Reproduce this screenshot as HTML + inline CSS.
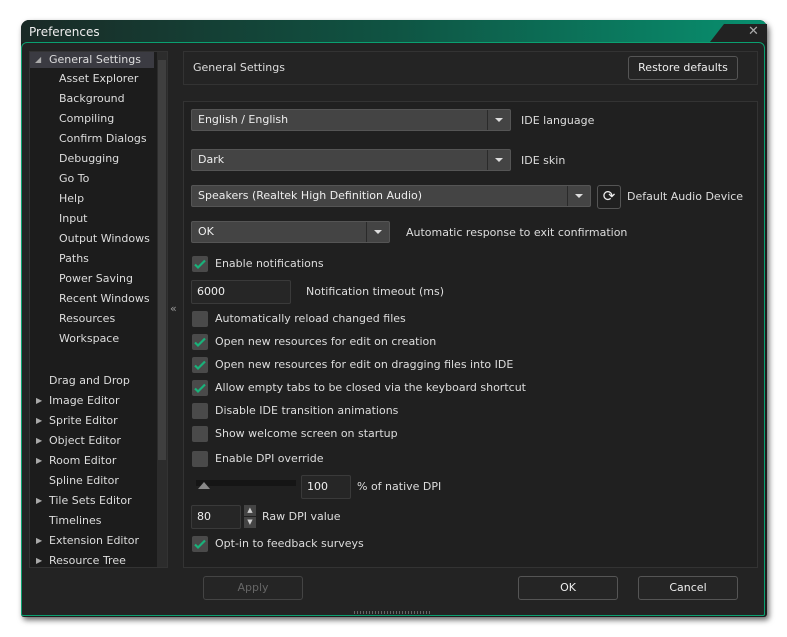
<!DOCTYPE html><html><head><style>
body{margin:0;width:787px;height:637px;background:#fff;position:relative;overflow:hidden;font-family:"DejaVu Sans","Liberation Sans",sans-serif;font-size:11px;color:#ddd}
.a{position:absolute}
.win{left:21px;top:20px;width:746px;height:597px;background:#1e1e1e;border-radius:8px 8px 3px 3px;box-shadow:2px 3px 6px rgba(0,0,0,.6)}
.title{left:21px;top:20px;width:746px;height:22px;border-radius:8px 8px 0 0;background:linear-gradient(90deg,#1a2a26 0%,#0f5443 50%,#08906f 100%)}
.body{left:21px;top:42px;width:744px;height:574px;border:1px solid #0aa070;border-radius:6px 6px 2px 2px;background:#232323;box-sizing:border-box}
.t{white-space:nowrap;line-height:16px}
.dd{background:#444;border:1px solid #555;border-radius:2px;height:22px;box-sizing:border-box;padding-left:6px;line-height:20px;color:#eee}
.dda{position:absolute;right:0;top:0;width:22px;height:20px;border-left:1px solid #2a2a2a}
.dda:after{content:"";position:absolute;left:7px;top:8px;border:4px solid transparent;border-top:4px solid #ddd}
.cb{width:16px;height:16px;background:#4a4a4a;border-radius:2px}
.in{background:#262626;border:1px solid #3a3a3a;border-radius:2px;height:24px;box-sizing:border-box;padding-left:5px;line-height:22px;color:#eee}
.btn{border:1px solid #555;border-radius:3px;box-sizing:border-box;text-align:center;height:24px;line-height:22px;color:#eee;background:#252525}
</style></head><body>
<div class="a win"></div>
<div class="a title"></div>
<div class="a" style="left:710px;top:24px;width:57px;height:18px;background:#222;clip-path:polygon(14px 0,100% 0,100% 100%,0 100%)"></div>
<div class="a t" style="left:29px;top:24px;font-size:12px;color:#eee">Preferences</div>
<div class="a" style="left:748px;top:24px;font-size:13px;color:#aaa">✕</div>
<div class="a body"></div>
<div class="a" style="left:29px;top:51px;width:139px;height:517px;background:#1c1c1c;border:1px solid #333;box-sizing:border-box"></div>
<div class="a" style="left:30px;top:52px;width:124px;height:16px;background:#3b3b42"></div>
<div class="a" style="left:157px;top:52px;width:10px;height:515px;background:#2c2c2c"></div>
<div class="a" style="left:158px;top:60px;width:8px;height:400px;background:#3f3f3f"></div>
<div class="a" style="left:35px;top:55px;font-size:8px;color:#aaa">◢</div>
<div class="a t" style="left:49px;top:52px">General Settings</div>
<div class="a" style="left:59px;top:69px;line-height:20px">Asset Explorer<br>Background<br>Compiling<br>Confirm Dialogs<br>Debugging<br>Go To<br>Help<br>Input<br>Output Windows<br>Paths<br>Power Saving<br>Recent Windows<br>Resources<br>Workspace</div>
<div class="a" style="left:49px;top:371px;line-height:20px">Drag and Drop<br>Image Editor<br>Sprite Editor<br>Object Editor<br>Room Editor<br>Spline Editor<br>Tile Sets Editor<br>Timelines<br>Extension Editor<br>Resource Tree</div>
<div class="a" style="left:36px;top:391px;line-height:20px;font-size:8px;color:#aaa">▶<br>▶<br>▶<br>▶<br><br>▶<br><br>▶<br>▶</div>
<div class="a" style="left:170px;top:302px;color:#999">«</div>
<div class="a" style="left:183px;top:51px;width:575px;height:34px;border:1px solid #333;box-sizing:border-box;background:#242424"></div>
<div class="a t" style="left:193px;top:60px">General Settings</div>
<div class="a btn" style="left:628px;top:56px;width:110px">Restore defaults</div>
<div class="a" style="left:183px;top:101px;width:575px;height:467px;border:1px solid #333;box-sizing:border-box;background:#202020"></div>
<div class="a dd" style="left:191px;top:109px;width:320px">English / English<div class="dda"></div></div>
<div class="a t" style="left:521px;top:113px">IDE language</div>
<div class="a dd" style="left:191px;top:149px;width:320px">Dark<div class="dda"></div></div>
<div class="a t" style="left:521px;top:153px">IDE skin</div>
<div class="a dd" style="left:191px;top:185px;width:400px">Speakers (Realtek High Definition Audio)<div class="dda"></div></div>
<div class="a" style="left:597px;top:185px;width:24px;height:24px;border:1px solid #555;border-radius:3px;box-sizing:border-box;text-align:center;line-height:21px;font-size:15px;color:#eee">⟳</div>
<div class="a t" style="left:627px;top:189px">Default Audio Device</div>
<div class="a dd" style="left:191px;top:221px;width:199px">OK<div class="dda"></div></div>
<div class="a t" style="left:406px;top:225px">Automatic response to exit confirmation</div>
<div class="a in" style="left:191px;top:280px;width:100px">6000</div>
<div class="a t" style="left:306px;top:284px">Notification timeout (ms)</div>
<div id="cbs"></div>
<div class="a" style="left:196px;top:480px;width:100px;height:6px;background:#151515"></div>
<div class="a" style="left:198px;top:482px;border:6px solid transparent;border-bottom:7px solid #888;border-top:0"></div>
<div class="a in" style="left:301px;top:475px;width:50px">100</div>
<div class="a t" style="left:357px;top:479px">% of native DPI</div>
<div class="a in" style="left:191px;top:505px;width:50px">80</div>
<div class="a" style="left:244px;top:505px;width:12px;height:11px;background:#444;font-size:7px;text-align:center;color:#ccc;line-height:11px">▲</div>
<div class="a" style="left:244px;top:517px;width:12px;height:11px;background:#444;font-size:7px;text-align:center;color:#ccc;line-height:11px">▼</div>
<div class="a t" style="left:262px;top:509px">Raw DPI value</div>
<div class="a btn" style="left:203px;top:576px;width:100px;color:#666;border-color:#444">Apply</div>
<div class="a btn" style="left:518px;top:576px;width:100px">OK</div>
<div class="a btn" style="left:638px;top:576px;width:100px">Cancel</div>
<div class="a" style="left:354px;top:611px;width:78px;height:3px;background:repeating-linear-gradient(90deg,#666 0 1px,transparent 1px 3px)"></div>
<script>
var L=[[264,1,"Enable notifications"],[319,0,"Automatically reload changed files"],[342,1,"Open new resources for edit on creation"],[365,1,"Open new resources for edit on dragging files into IDE"],[388,1,"Allow empty tabs to be closed via the keyboard shortcut"],[411,0,"Disable IDE transition animations"],[434,0,"Show welcome screen on startup"],[459,0,"Enable DPI override"],[544,1,"Opt-in to feedback surveys"]],h="";
L.forEach(function(c){h+='<div class="a cb" style="left:192px;top:'+(c[0]-8)+'px">'+(c[1]?'<svg width="16" height="16"><path d="M3 8.5l3 3 7-7" stroke="#19b27a" stroke-width="2.2" fill="none"/></svg>':'')+'</div><div class="a t" style="left:215px;top:'+(c[0]-8)+'px">'+c[2]+'</div>'});
document.getElementById("cbs").innerHTML=h;
</script>
</body></html>
